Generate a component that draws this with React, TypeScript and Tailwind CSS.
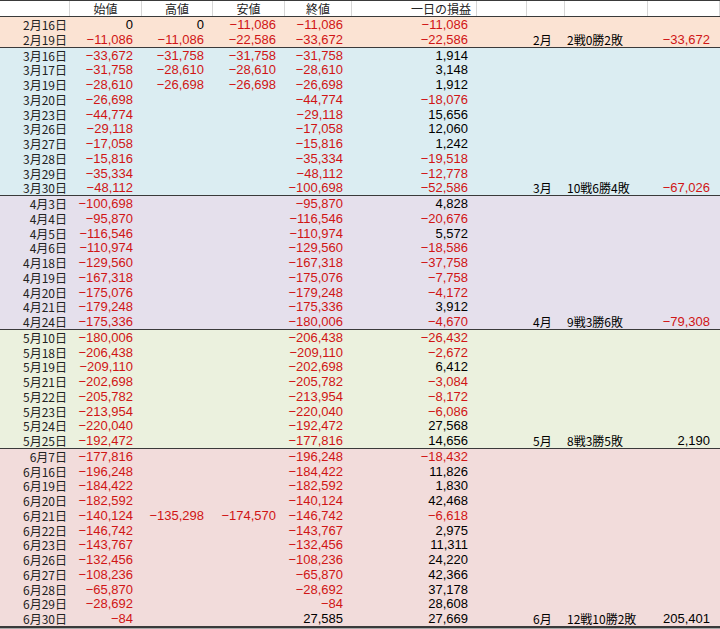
import React from "react";

type Row = {
  date: string;
  open: string;
  high?: string;
  low?: string;
  close: string;
  diff: string;
  month?: string;
  record?: string;
  total?: string;
};

type Group = { bg: string; rows: Row[] };

const GROUPS: Group[] = [
  {
    bg: "bg-[#fbe3d3]",
    rows: [
      { date: "2月16日", open: "0", high: "0", low: "-11,086", close: "-11,086", diff: "-11,086" },
      { date: "2月19日", open: "-11,086", high: "-11,086", low: "-22,586", close: "-33,672", diff: "-22,586", month: "2月", record: "2戦0勝2敗", total: "-33,672" },
    ],
  },
  {
    bg: "bg-[#dbedf2]",
    rows: [
      { date: "3月16日", open: "-33,672", high: "-31,758", low: "-31,758", close: "-31,758", diff: "1,914" },
      { date: "3月17日", open: "-31,758", high: "-28,610", low: "-28,610", close: "-28,610", diff: "3,148" },
      { date: "3月19日", open: "-28,610", high: "-26,698", low: "-26,698", close: "-26,698", diff: "1,912" },
      { date: "3月20日", open: "-26,698", close: "-44,774", diff: "-18,076" },
      { date: "3月23日", open: "-44,774", close: "-29,118", diff: "15,656" },
      { date: "3月26日", open: "-29,118", close: "-17,058", diff: "12,060" },
      { date: "3月27日", open: "-17,058", close: "-15,816", diff: "1,242" },
      { date: "3月28日", open: "-15,816", close: "-35,334", diff: "-19,518" },
      { date: "3月29日", open: "-35,334", close: "-48,112", diff: "-12,778" },
      { date: "3月30日", open: "-48,112", close: "-100,698", diff: "-52,586", month: "3月", record: "10戦6勝4敗", total: "-67,026" },
    ],
  },
  {
    bg: "bg-[#e5e0ec]",
    rows: [
      { date: "4月3日", open: "-100,698", close: "-95,870", diff: "4,828" },
      { date: "4月4日", open: "-95,870", close: "-116,546", diff: "-20,676" },
      { date: "4月5日", open: "-116,546", close: "-110,974", diff: "5,572" },
      { date: "4月6日", open: "-110,974", close: "-129,560", diff: "-18,586" },
      { date: "4月18日", open: "-129,560", close: "-167,318", diff: "-37,758" },
      { date: "4月19日", open: "-167,318", close: "-175,076", diff: "-7,758" },
      { date: "4月20日", open: "-175,076", close: "-179,248", diff: "-4,172" },
      { date: "4月21日", open: "-179,248", close: "-175,336", diff: "3,912" },
      { date: "4月24日", open: "-175,336", close: "-180,006", diff: "-4,670", month: "4月", record: "9戦3勝6敗", total: "-79,308" },
    ],
  },
  {
    bg: "bg-[#ebf1de]",
    rows: [
      { date: "5月10日", open: "-180,006", close: "-206,438", diff: "-26,432" },
      { date: "5月18日", open: "-206,438", close: "-209,110", diff: "-2,672" },
      { date: "5月19日", open: "-209,110", close: "-202,698", diff: "6,412" },
      { date: "5月21日", open: "-202,698", close: "-205,782", diff: "-3,084" },
      { date: "5月22日", open: "-205,782", close: "-213,954", diff: "-8,172" },
      { date: "5月23日", open: "-213,954", close: "-220,040", diff: "-6,086" },
      { date: "5月24日", open: "-220,040", close: "-192,472", diff: "27,568" },
      { date: "5月25日", open: "-192,472", close: "-177,816", diff: "14,656", month: "5月", record: "8戦3勝5敗", total: "2,190" },
    ],
  },
  {
    bg: "bg-[#f2dcdb]",
    rows: [
      { date: "6月7日", open: "-177,816", close: "-196,248", diff: "-18,432" },
      { date: "6月16日", open: "-196,248", close: "-184,422", diff: "11,826" },
      { date: "6月19日", open: "-184,422", close: "-182,592", diff: "1,830" },
      { date: "6月20日", open: "-182,592", close: "-140,124", diff: "42,468" },
      { date: "6月21日", open: "-140,124", high: "-135,298", low: "-174,570", close: "-146,742", diff: "-6,618" },
      { date: "6月22日", open: "-146,742", close: "-143,767", diff: "2,975" },
      { date: "6月23日", open: "-143,767", close: "-132,456", diff: "11,311" },
      { date: "6月26日", open: "-132,456", close: "-108,236", diff: "24,220" },
      { date: "6月27日", open: "-108,236", close: "-65,870", diff: "42,366" },
      { date: "6月28日", open: "-65,870", close: "-28,692", diff: "37,178" },
      { date: "6月29日", open: "-28,692", close: "-84", diff: "28,608" },
      { date: "6月30日", open: "-84", close: "27,585", diff: "27,669", month: "6月", record: "12戦10勝2敗", total: "205,401" },
    ],
  },
];

const COLS = "grid grid-cols-[70px_72px_71px_72px_67px_125px_50px_38px_83px_72px]";
const JP = "font-['Noto_Sans_CJK_JP',sans-serif] text-[12px] leading-[14px]";
const NUM = "font-['Liberation_Sans',Arial,sans-serif] text-[13px] leading-[14px]";

function Num({ value, className = "" }: { value?: string; className?: string }) {
  if (!value) return <div />;
  const neg = value.startsWith("-");
  return (
    <div className={`${NUM} text-right pr-[9px] ${neg ? "text-[#d01515]" : "text-black"} ${className}`}>
      {neg ? "\u2212" + value.slice(1) : value}
    </div>
  );
}

export default function App() {
  const headers = ["", "始値", "高値", "安値", "終値", "", "", "", "", ""];

  return (
    <div className="w-[720px] h-[629px] overflow-hidden bg-[#a9a9a9]">
      {/* Header */}
      <div className={`${COLS} h-[17px] bg-white border-t border-b border-[#3a3a3a]`}>
        {headers.map((h, i) => (
          <div
            key={i}
            className={`${JP} pt-px text-[#222] text-center border-r border-[#d6d6d6]`}
          >
            {i === 5 ? <div className="text-right pr-[5px]">一日の損益</div> : h}
          </div>
        ))}
      </div>

      {/* Month groups */}
      {GROUPS.map((g, gi) => (
        <div
          key={gi}
          className={`${g.bg} ${gi === GROUPS.length - 1 ? "border-b-2" : "border-b"} border-[#3a3a3a]`}
        >
          {g.rows.map((r) => (
            <div key={r.date} className={`${COLS} h-[14.75px] pt-px overflow-hidden`}>
              <div className={`${JP} text-right pr-[3px] text-[#222]`}>{r.date}</div>
              <Num value={r.open} />
              <Num value={r.high} />
              <Num value={r.low} />
              <Num value={r.close} />
              <Num value={r.diff} />
              <div />
              <div className={`${JP} pl-[6px] text-black`}>{r.month}</div>
              <div className={`${JP} pl-[2px] text-black whitespace-nowrap`}>{r.record}</div>
              <Num value={r.total} className="pr-[10px]" />
            </div>
          ))}
        </div>
      ))}
    </div>
  );
}
